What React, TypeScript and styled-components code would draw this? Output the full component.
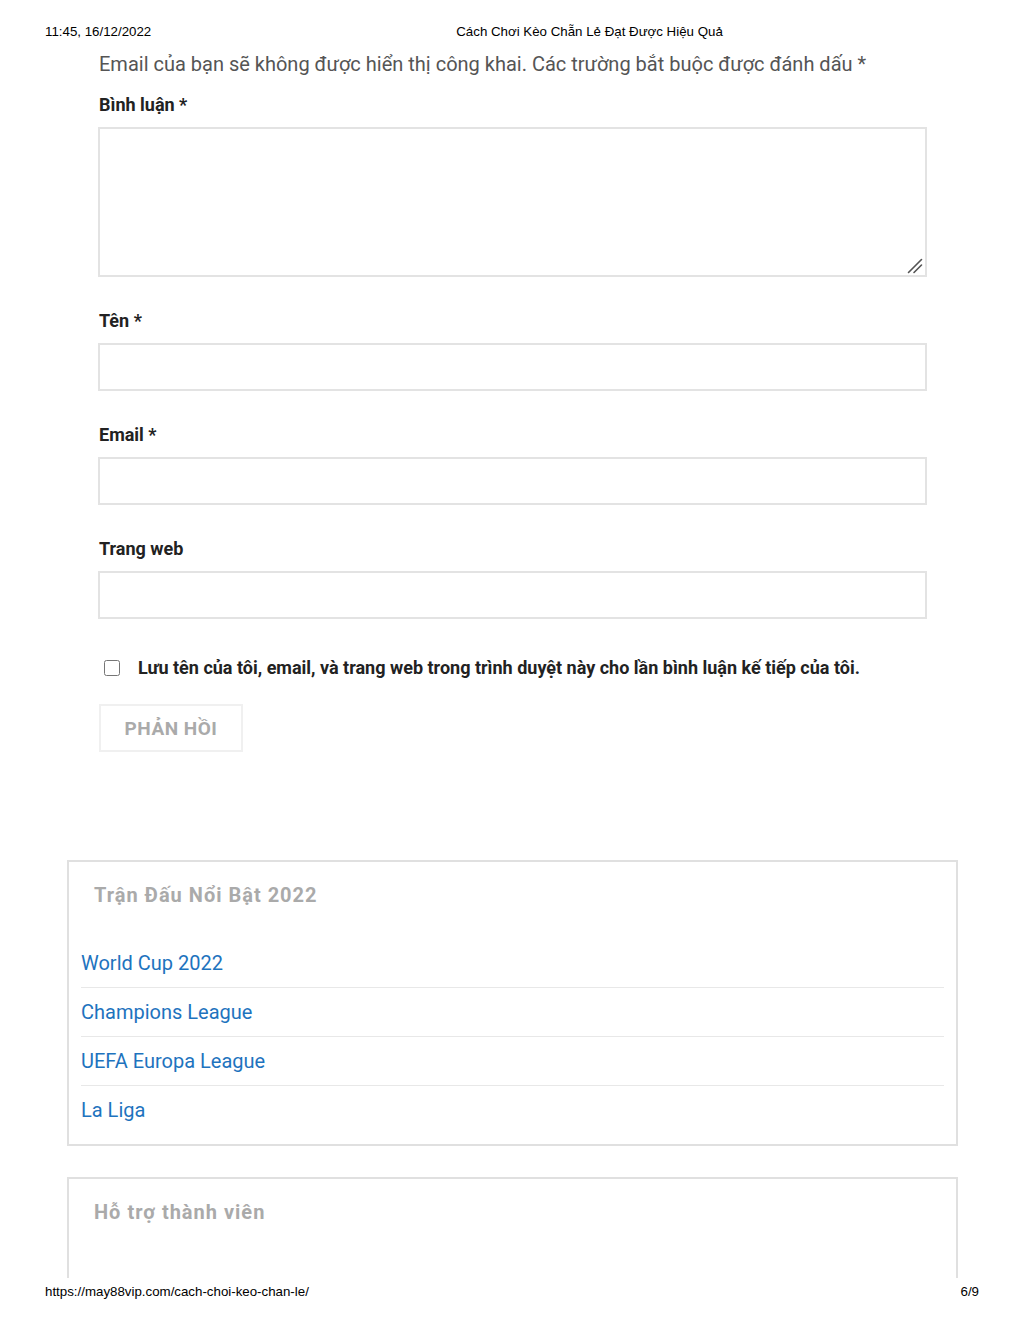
import styled, { createGlobalStyle } from "styled-components";

const GlobalStyle = createGlobalStyle`
  html, body {
    margin: 0;
    padding: 0;
    background: #fff;
  }
  * {
    box-sizing: border-box;
  }
`;

const links = ["World Cup 2022", "Champions League", "UEFA Europa League", "La Liga"];

const ResizeGrip = () => (
  <Grip width="16" height="16" viewBox="0 0 16 16">
    <line x1="1.5" y1="14.5" x2="14.5" y2="1.5" stroke="#555" strokeWidth="1.6" strokeLinecap="round" />
    <line x1="7" y1="14.5" x2="14.5" y2="7" stroke="#555" strokeWidth="1.6" strokeLinecap="round" />
  </Grip>
);

const App = () => {
  return (
    <>
      <GlobalStyle />
      <Page>
        <PrintHeader>
          <PrintText>11:45, 16/12/2022</PrintText>
          <PrintTitle>Cách Chơi Kèo Chẵn Lẻ Đạt Được Hiệu Quả</PrintTitle>
        </PrintHeader>

        <Content>
          <CommentForm>
            <Notice>Email của bạn sẽ không được hiển thị công khai. Các trường bắt buộc được đánh dấu *</Notice>

            <Field>
              <Label>Bình luận *</Label>
              <AreaWrap>
                <TextArea />
                <ResizeGrip />
              </AreaWrap>
            </Field>
            <Field>
              <Label>Tên *</Label>
              <TextInput type="text" />
            </Field>
            <Field>
              <Label>Email *</Label>
              <TextInput type="email" />
            </Field>
            <Field>
              <Label>Trang web</Label>
              <TextInput type="url" />
            </Field>

            <CheckRow>
              <CheckBox type="checkbox" />
              <CheckLabel>
                Lưu tên của tôi, email, và trang web trong trình duyệt này cho lần bình luận kế tiếp của tôi.
              </CheckLabel>
            </CheckRow>

            <SubmitButton>PHẢN HỒI</SubmitButton>
          </CommentForm>

          <Widget>
            <WidgetTitle>Trận Đấu Nổi Bật 2022</WidgetTitle>
            <LinkList>
              {links.map((link) => (
                <LinkItem key={link}>
                  <WidgetLink href="#">{link}</WidgetLink>
                </LinkItem>
              ))}
            </LinkList>
          </Widget>

          <Widget tall>
            <WidgetTitle>Hỗ trợ thành viên</WidgetTitle>
          </Widget>
        </Content>

        <PrintFooter>
          <PrintText>https://may88vip.com/cach-choi-keo-chan-le/</PrintText>
          <PrintText>6/9</PrintText>
        </PrintFooter>
      </Page>
    </>
  );
};

export default App;

const Page = styled.div`
  width: 1024px;
  height: 1325px;
  display: flex;
  flex-direction: column;
  overflow: hidden;
`;

const PrintHeader = styled.div`
  height: 48px;
  display: flex;
  align-items: flex-start;
  padding: 24px 45px 0 45px;
`;

const PrintText = styled.span`
  font-family: "Liberation Sans", Arial, sans-serif;
  font-size: 13.3px;
  line-height: 16px;
  color: #000;
`;

const PrintTitle = styled(PrintText)`
  margin-left: 305px;
`;

const Content = styled.div`
  height: 1230px;
  overflow: hidden;
  display: flex;
  flex-direction: column;
  font-family: Roboto, "Liberation Sans", sans-serif;
`;

const CommentForm = styled.div`
  padding: 0 97px 0 98px;
  display: flex;
  flex-direction: column;
`;

const Notice = styled.p`
  margin: 2px 0 0 1px;
  font-size: 20px;
  line-height: 28px;
  color: #555;
`;

const Field = styled.div`
  display: flex;
  flex-direction: column;
  margin-top: 14px;

  & + & {
    margin-top: 31px;
  }
`;

const Label = styled.label`
  font-size: 18px;
  font-weight: 700;
  line-height: 24px;
  color: #222;
  padding-top: 1px;
  margin: 0 0 10px 1px;
`;

const AreaWrap = styled.div`
  position: relative;
  display: flex;
`;

const TextArea = styled.textarea`
  width: 100%;
  height: 150px;
  border: 2px solid #e3e3e3;
  background: #fff;
  resize: none;
  font-family: inherit;
`;

const Grip = styled.svg`
  position: absolute;
  right: 4px;
  bottom: 3px;
`;

const TextInput = styled.input`
  width: 100%;
  height: 48px;
  border: 2px solid #e3e3e3;
  background: #fff;
  font-family: inherit;
`;

const CheckRow = styled.div`
  display: flex;
  align-items: center;
  margin-top: 37px;
`;

const CheckBox = styled.input`
  width: 16px;
  height: 16px;
  margin: 0 18px 0 6px;
`;

const CheckLabel = styled.label`
  font-size: 18px;
  font-weight: 700;
  line-height: 24px;
  color: #222;
`;

const SubmitButton = styled.button`
  align-self: flex-start;
  margin: 24px 0 0 1px;
  width: 144px;
  height: 48px;
  border: 2px solid #f0f0f0;
  background: #fff;
  font-family: Roboto, "Liberation Sans", sans-serif;
  font-size: 19px;
  font-weight: 700;
  letter-spacing: 0.5px;
  color: #aaa;
`;

const Widget = styled.div<{ tall?: boolean }>`
  margin: ${({ tall }) => (tall ? "31px" : "108px")} 66px 0 67px;
  border: 2px solid #e0e0e0;
  padding: 19px 12px 10px 12px;
  min-height: ${({ tall }) => (tall ? "200px" : "0")};
  flex-shrink: 0;
`;

const WidgetTitle = styled.h3`
  margin: 0 0 0 13px;
  font-size: 20px;
  line-height: 28px;
  font-weight: 700;
  letter-spacing: 1px;
  color: #aaa;
`;

const LinkList = styled.ul`
  list-style: none;
  margin: 40px 0 0 0;
  padding: 0;
`;

const LinkItem = styled.li`
  padding: 10px 0;
  border-bottom: 1px solid #e8e8e8;

  &:first-child {
    padding-top: 0;
  }
  &:last-child {
    border-bottom: none;
  }
`;

const WidgetLink = styled.a`
  font-size: 20px;
  line-height: 28px;
  color: #1e73be;
  text-decoration: none;
`;

const PrintFooter = styled.div`
  flex: 1;
  display: flex;
  justify-content: space-between;
  padding: 6px 45px 0 45px;
`;
